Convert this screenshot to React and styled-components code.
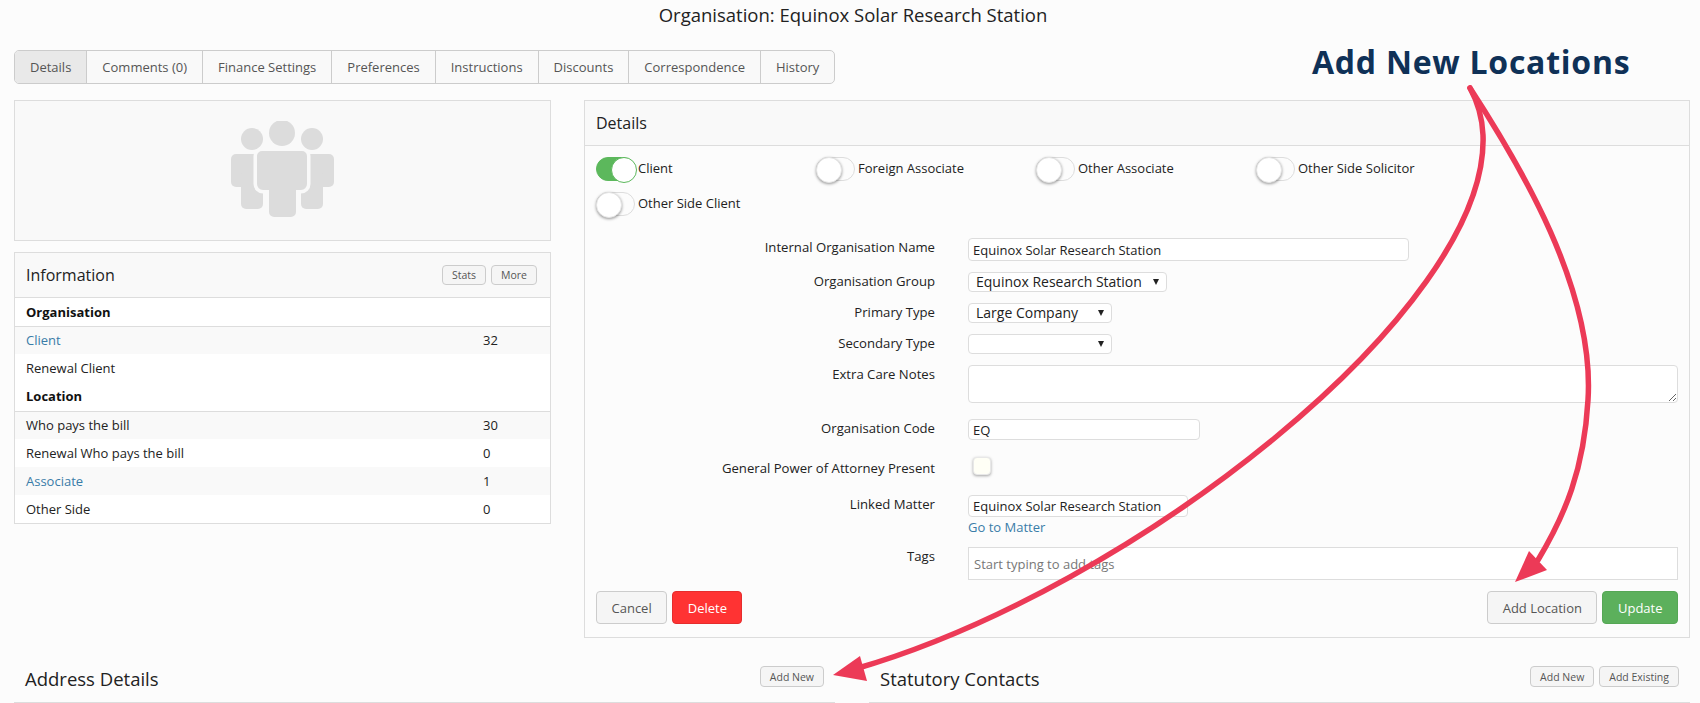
import React from "react";
import styled, { createGlobalStyle } from "styled-components";

const Global = createGlobalStyle`
  * { box-sizing: border-box; }
  html, body { margin: 0; padding: 0; height: 703px; overflow: hidden; background: #fcfcfc; }
  body { font-family: "Open Sans", "Liberation Sans", sans-serif; font-size: 13px; color: #222; }
`;

const Page = styled.div`
  position: relative;
  width: 1700px;
  height: 703px;
  overflow: hidden;
  padding: 0 10px 0 14px;
`;
const Title = styled.h1`
  margin: 0;
  height: 50px;
  padding: 3px 0 0 2px;
  text-align: center;
  font-size: 18.5px;
  line-height: 24px;
  font-weight: 400;
  color: #222;
`;
const Tabs = styled.div`
  display: inline-flex;
  height: 34px;
  border: 1px solid #ccc;
  border-radius: 5px;
  background: #f9f9f9;
  overflow: hidden;
  vertical-align: top;
`;
const Tab = styled.div`
  display: flex;
  align-items: center;
  padding: 0 15px;
  font-size: 13px;
  color: #555;
  background: ${(p) => (p.$active ? "#e9e9e9" : "transparent")};
  & + & { border-left: 1px solid #ccc; }
`;
const Columns = styled.div`
  display: grid;
  grid-template-columns: 537px 1106px;
  column-gap: 33px;
  margin-top: 16px;
`;
const LeftCol = styled.div`
  display: flex;
  flex-direction: column;
  gap: 11px;
`;
const ImagePanel = styled.div`
  height: 141px;
  border: 1px solid #ddd;
  background: #f9f9f9;
  display: flex;
  align-items: center;
  justify-content: center;
`;
const Panel = styled.div`
  border: 1px solid #ddd;
  background: #fcfcfc;
`;
const PanelHeader = styled.div`
  height: 45px;
  padding: 0 13px 0 11px;
  display: flex;
  align-items: center;
  justify-content: space-between;
  background: #f9f9f9;
  border-bottom: 1px solid #ddd;
`;
const PanelTitle = styled.div`
  font-size: 16px;
  color: #222;
`;
const SmallButtons = styled.div`
  display: flex;
  gap: 5px;
`;
const SmallButton = styled.button`
  height: ${(p) => p.$h || 21}px;
  padding: 0 9px;
  font-family: inherit;
  font-size: 10.5px;
  color: #555;
  background: #f5f5f5;
  border: 1px solid #ccc;
  border-radius: 4px;
`;
const InfoTable = styled.table`
  width: 100%;
  border-collapse: collapse;
  background: #fff;
`;
const Row = styled.tr`
  background: ${(p) => (p.$striped ? "#f9f9f9" : "#fff")};
  height: 28px;
`;
const HeadRow = styled.tr`
  height: ${(p) => p.$h || 28}px;
  border-bottom: 1px solid #ddd;
`;
const HeadCell = styled.th`
  padding: 0 11px;
  text-align: left;
  font-size: 13px;
  font-weight: 700;
  color: #111;
`;
const Cell = styled.td`
  padding: 0 11px;
  font-size: 13px;
  color: #222;
  &:last-child { width: 67px; padding: 0; }
`;
const Link = styled.a`
  color: #3a7ca8;
  font-size: 13px;
`;
const DetailsBody = styled.div`
  padding: 11px 11px 13px;
`;
const ToggleGrid = styled.div`
  display: grid;
  grid-template-columns: repeat(4, 220px);
  row-gap: 11px;
`;
const ToggleItem = styled.div`
  display: flex;
  align-items: center;
  gap: 3px;
  height: 24px;
  font-size: 13px;
  padding-bottom: 2px;
`;
const Toggle = styled.span`
  position: relative;
  display: block;
  width: 39px;
  height: 24px;
  margin-bottom: -2px;
  border-radius: 12px;
  border: 1px solid ${(p) => (p.$on ? "#5cb85c" : "#ddd")};
  background: ${(p) => (p.$on ? "#5cb85c" : "#fcfcfc")};
  &::after {
    content: "";
    position: absolute;
    top: -1px;
    left: ${(p) => (p.$on ? "14px" : "-1px")};
    width: 24px;
    height: 24px;
    border-radius: 50%;
    background: #fff;
    border: 1px solid ${(p) => (p.$on ? "#5cb85c" : "#e4e4e4")};
    box-shadow: ${(p) => (p.$on ? "none" : "0 1px 3px rgba(0,0,0,.4)")};
  }
`;
const Form = styled.div`
  margin-top: 22px;
`;
const FormRow = styled.div`
  display: grid;
  grid-template-columns: 339px 1fr;
  column-gap: 33px;
  align-items: start;
  margin-bottom: ${(p) => p.$mb ?? 11}px;
`;
const Label = styled.label`
  text-align: right;
  line-height: 18px;
  padding-top: ${(p) => p.$pt || 0}px;
  font-size: 13.15px;
  color: #222;
`;
const TextInput = styled.input`
  display: block;
  width: ${(p) => p.$w}px;
  height: ${(p) => p.$h}px;
  padding: 0 4px;
  font-family: inherit;
  font-size: 13px;
  color: #222;
  background: #fff;
  border: 1px solid #ddd;
  border-radius: 4px;
  outline: none;
`;
const TagsInput = styled(TextInput)`
  width: 100%;
  padding: 0 5px;
  border-radius: 0;
  &::placeholder { color: #777; opacity: 1; }
`;
const TextArea = styled.textarea`
  display: block;
  width: 100%;
  height: 38px;
  background: #fff;
  border: 1px solid #ddd;
  border-radius: 4px;
  outline: none;
  resize: vertical;
`;
const SelectBox = styled.div`
  position: relative;
  width: ${(p) => p.$w}px;
  height: 20px;
  padding-left: 7px;
  font-size: 14px;
  line-height: 18px;
  color: #222;
  background: #fff;
  border: 1px solid #ddd;
  border-radius: 4px;
  &::after {
    content: "";
    position: absolute;
    right: 7px;
    top: 6px;
    border-style: solid;
    border-width: 6px 3px 0;
    border-color: #222 transparent transparent;
  }
`;
const CheckBox = styled.span`
  display: block;
  width: 18px;
  height: 18px;
  margin-left: 5px;
  border-radius: 4px;
  border: 1px solid #e8e8e8;
  background: #fffff6;
  box-shadow: 0 1px 3px rgba(0,0,0,.35);
`;
const GoLink = styled(Link)`
  display: block;
  line-height: 18px;
  margin-top: 1px;
`;
const Actions = styled.div`
  display: flex;
  justify-content: space-between;
`;
const ActionGroup = styled.div`
  display: flex;
  gap: 5px;
`;
const Button = styled.button`
  height: 33px;
  padding: 0 14.5px;
  font-family: inherit;
  font-size: 13px;
  color: ${(p) => (p.$variant ? "#fff" : "#555")};
  background: ${(p) => (p.$variant === "danger" ? "#ff3333" : p.$variant === "success" ? "#5cb05c" : "#f5f5f5")};
  border: 1px solid ${(p) => (p.$variant === "danger" ? "#e52d2d" : p.$variant === "success" ? "#55a755" : "#ccc")};
  border-radius: 4px;
`;
const Sections = styled.div`
  display: grid;
  grid-template-columns: 821px 821px;
  column-gap: 34px;
  margin-top: 28px;
`;
const SectionHeader = styled.div`
  height: 37px;
  padding: 0 11px;
  display: flex;
  justify-content: space-between;
  align-items: flex-start;
  border-bottom: 1px solid #ddd;
`;
const SectionTitle = styled.div`
  font-size: 18.5px;
  line-height: 24px;
  margin-top: 1px;
  color: #222;
`;
const Callout = styled.div`
  position: absolute;
  left: 1312px;
  top: 41px;
  font-family: "Open Sans", sans-serif;
  font-weight: 700;
  font-size: 32px;
  letter-spacing: 0.75px;
  line-height: 42px;
  color: #0f3157;
  white-space: nowrap;
`;
const ArrowLayer = styled.svg`
  position: absolute;
  left: 0;
  top: 0;
  pointer-events: none;
`;

const Arrows = () => (
  <ArrowLayer width="1700" height="703" viewBox="0 0 1700 703">
    <path d="M1470 88 Q1482 110 1483 135 C1490 310 1130 590 855 669" fill="none" stroke="#ec3a57" strokeWidth="5.5" strokeLinecap="round" />
    <path d="M1470 88 C1520 165 1595 290 1588 400 C1584 470 1565 515 1538 560" fill="none" stroke="#ec3a57" strokeWidth="5.5" strokeLinecap="round" />
    <polygon points="833,675 860,656 867,681" fill="#ec3a57" />
    <polygon points="1515,582 1529,551 1547,570" fill="#ec3a57" />
  </ArrowLayer>
);

const GroupIcon = () => {
  const body = "M262 151h40a5 5 0 0 1 5 5v28a6 6 0 0 1-6 6h-5v22a5 5 0 0 1-5 5h-17a5 5 0 0 1-5-5v-22h-6a6 6 0 0 1-6-6v-28a5 5 0 0 1 5-5z";
  return (
    <svg width="106" height="100" viewBox="230 121 106 100" fill="#dcdcdc">
      <circle cx="282" cy="133" r="13" />
      <circle cx="252" cy="139" r="11" />
      <circle cx="312" cy="139" r="11" />
      <rect x="231" y="154" width="30" height="33" rx="5" />
      <rect x="241" y="170" width="22" height="39" rx="5" />
      <rect x="303" y="154" width="31" height="33" rx="5" />
      <rect x="301" y="170" width="22" height="39" rx="5" />
      <path d={body} fill="#f9f9f9" stroke="#f9f9f9" strokeWidth="7" />
      <path d={body} />
    </svg>
  );
};

const tabs = ["Details", "Comments (0)", "Finance Settings", "Preferences", "Instructions", "Discounts", "Correspondence", "History"];
const toggles = [["Client", true], ["Foreign Associate"], ["Other Associate"], ["Other Side Solicitor"], ["Other Side Client"]];

export default function App() {
  return (
    <Page>
      <Global />
      <Title>Organisation: Equinox Solar Research Station</Title>
      <Tabs>
        {tabs.map((t, i) => (
          <Tab key={t} $active={i === 0}>{t}</Tab>
        ))}
      </Tabs>
      <Columns>
        <LeftCol>
          <ImagePanel><GroupIcon /></ImagePanel>
          <Panel>
            <PanelHeader>
              <PanelTitle>Information</PanelTitle>
              <SmallButtons>
                <SmallButton $h={20}>Stats</SmallButton>
                <SmallButton $h={20}>More</SmallButton>
              </SmallButtons>
            </PanelHeader>
            <InfoTable>
              <tbody>
                <HeadRow><HeadCell colSpan={2}>Organisation</HeadCell></HeadRow>
                <Row $striped><Cell><Link>Client</Link></Cell><Cell>32</Cell></Row>
                <Row><Cell>Renewal Client</Cell><Cell /></Row>
                <HeadRow $h={29}><HeadCell colSpan={2}>Location</HeadCell></HeadRow>
                <Row $striped><Cell>Who pays the bill</Cell><Cell>30</Cell></Row>
                <Row><Cell>Renewal Who pays the bill</Cell><Cell>0</Cell></Row>
                <Row $striped><Cell><Link>Associate</Link></Cell><Cell>1</Cell></Row>
                <Row><Cell>Other Side</Cell><Cell>0</Cell></Row>
              </tbody>
            </InfoTable>
          </Panel>
        </LeftCol>
        <Panel>
          <PanelHeader><PanelTitle>Details</PanelTitle></PanelHeader>
          <DetailsBody>
            <ToggleGrid>
              {toggles.map(([name, on]) => (
                <ToggleItem key={name}><Toggle $on={on} />{name}</ToggleItem>
              ))}
            </ToggleGrid>
            <Form>
              <FormRow>
                <Label>Internal Organisation Name</Label>
                <TextInput $w={441} $h={23} readOnly value="Equinox Solar Research Station" />
              </FormRow>
              <FormRow>
                <Label>Organisation Group</Label>
                <SelectBox $w={199}>Equinox Research Station</SelectBox>
              </FormRow>
              <FormRow>
                <Label>Primary Type</Label>
                <SelectBox $w={144}>Large Company</SelectBox>
              </FormRow>
              <FormRow>
                <Label>Secondary Type</Label>
                <SelectBox $w={144} />
              </FormRow>
              <FormRow $mb={16}>
                <Label>Extra Care Notes</Label>
                <TextArea readOnly />
              </FormRow>
              <FormRow $mb={17}>
                <Label>Organisation Code</Label>
                <TextInput $w={232} $h={21} readOnly value="EQ" />
              </FormRow>
              <FormRow $mb={18}>
                <Label $pt={2}>General Power of Attorney Present</Label>
                <CheckBox />
              </FormRow>
              <FormRow>
                <Label>Linked Matter</Label>
                <div>
                  <TextInput $w={220} $h={22} readOnly value="Equinox Solar Research Station" />
                  <GoLink>Go to Matter</GoLink>
                </div>
              </FormRow>
              <FormRow>
                <Label>Tags</Label>
                <TagsInput $h={33} readOnly placeholder="Start typing to add tags" />
              </FormRow>
            </Form>
            <Actions>
              <ActionGroup>
                <Button>Cancel</Button>
                <Button $variant="danger">Delete</Button>
              </ActionGroup>
              <ActionGroup>
                <Button>Add Location</Button>
                <Button $variant="success">Update</Button>
              </ActionGroup>
            </Actions>
          </DetailsBody>
        </Panel>
      </Columns>
      <Sections>
        <SectionHeader>
          <SectionTitle>Address Details</SectionTitle>
          <SmallButton>Add New</SmallButton>
        </SectionHeader>
        <SectionHeader>
          <SectionTitle>Statutory Contacts</SectionTitle>
          <SmallButtons>
            <SmallButton>Add New</SmallButton>
            <SmallButton>Add Existing</SmallButton>
          </SmallButtons>
        </SectionHeader>
      </Sections>
      <Callout>Add New Locations</Callout>
      <Arrows />
    </Page>
  );
}
